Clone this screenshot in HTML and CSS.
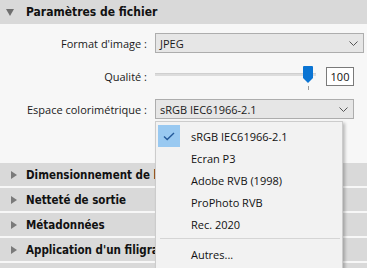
FILE: index.html
```html
<!DOCTYPE html>
<html>
<head>
    <title>Paramètres de fichier</title>
    <link rel="stylesheet" href="styles.css">
</head>
<body>
    <div class="panel">
        <div class="section-head open">
            <span class="tri-down"></span>
            <span class="section-title">Paramètres de fichier</span>
        </div>

        <div class="settings">
            <div class="row">
                <label class="label">Format d'image :</label>
                <div class="select wide">
                    <span>JPEG</span>
                    <svg class="chev" width="9" height="5" viewBox="0 0 9 5"><path d="M0.5 0.5 L4.5 4.5 L8.5 0.5" fill="none" stroke="#555" stroke-width="1"/></svg>
                </div>
            </div>

            <div class="row quality">
                <label class="label">Qualité :</label>
                <div class="slider">
                    <div class="track"></div>
                    <div class="thumb">
                        <svg width="10" height="17" viewBox="0 0 10 17"><path d="M1 0 H9 a1 1 0 0 1 1 1 V12 L5 17 L0 12 V1 a1 1 0 0 1 1 -1 Z" fill="#0a74d3"/></svg>
                    </div>
                    <div class="tick"></div>
                </div>
                <div class="num">100</div>
            </div>

            <div class="row">
                <label class="label">Espace colorimétrique :</label>
                <div class="select narrow">
                    <span>sRGB IEC61966-2.1</span>
                    <svg class="chev" width="9" height="5" viewBox="0 0 9 5"><path d="M0.5 0.5 L4.5 4.5 L8.5 0.5" fill="none" stroke="#555" stroke-width="1"/></svg>
                </div>
            </div>
        </div>

        <div class="section-head">
            <span class="tri-right"></span>
            <span class="section-title">Dimensionnement de l'image</span>
        </div>
        <div class="section-head">
            <span class="tri-right"></span>
            <span class="section-title">Netteté de sortie</span>
        </div>
        <div class="section-head">
            <span class="tri-right"></span>
            <span class="section-title">Métadonnées</span>
        </div>
        <div class="section-head">
            <span class="tri-right"></span>
            <span class="section-title">Application d'un filigrane</span>
        </div>
        <div class="section-head"></div>

        <div class="menu">
            <div class="item checked">
                <span class="check">
                    <svg width="12" height="9" viewBox="0 0 12 9"><path d="M1 4.5 L4.2 7.5 L11 1" fill="none" stroke="#24599a" stroke-width="1.4"/></svg>
                </span>
                <span>sRGB IEC61966-2.1</span>
            </div>
            <div class="item"><span class="check"></span><span>Ecran P3</span></div>
            <div class="item"><span class="check"></span><span>Adobe RVB (1998)</span></div>
            <div class="item"><span class="check"></span><span>ProPhoto RVB</span></div>
            <div class="item"><span class="check"></span><span>Rec. 2020</span></div>
            <div class="sep"></div>
            <div class="item"><span class="check"></span><span>Autres...</span></div>
        </div>
    </div>
</body>
</html>
```

FILE: styles.css
```css
body {
    margin: 0;
    background-color: #f7f7f7;
    font-family: "Open Sans", "Noto Sans", sans-serif;
    font-size: 11px;
    color: #1a1a1a;
}
.panel {
    position: relative;
    width: 367px;
    height: 268px;
    overflow: hidden;
}
.section-head {
    display: flex;
    align-items: center;
    height: 23px;
    margin-bottom: 2px;
    background-color: #d9d9d9;
    padding-left: 11px;
}
.section-head.open {
    height: 24px;
    margin-bottom: 0;
    padding-left: 6px;
}
.section-title {
    font-family: "DejaVu Sans Condensed", "DejaVu Sans", sans-serif;
    font-weight: bold;
    font-size: 11.5px;
    color: #111;
    white-space: nowrap;
}
.open .section-title {
    font-size: 12px;
}
.tri-down {
    width: 0;
    height: 0;
    border-left: 4px solid transparent;
    border-right: 4px solid transparent;
    border-top: 7px solid #6e6e6e;
    margin-right: 12px;
}
.tri-right {
    width: 0;
    height: 0;
    border-top: 4px solid transparent;
    border-bottom: 4px solid transparent;
    border-left: 6px solid #7a7a7a;
    margin-right: 9px;
}
.settings {
    display: flex;
    flex-direction: column;
    gap: 13px;
    box-sizing: border-box;
    height: 139px;
    padding-top: 9px;
}
.row {
    display: flex;
    align-items: center;
    height: 20px;
    flex-shrink: 0;
}
.label {
    width: 147px;
    text-align: right;
    margin-right: 8px;
    white-space: nowrap;
}
.select {
    display: flex;
    align-items: center;
    justify-content: space-between;
    box-sizing: border-box;
    height: 20px;
    padding: 0 5px 0 4px;
    background-color: #e6e6e6;
    border: 1px solid #adadad;
}
.select.wide {
    width: 209px;
}
.select.narrow {
    width: 199px;
}
.quality {
    height: 19px;
    margin-top: 1px;
}
.slider {
    position: relative;
    width: 161px;
    height: 19px;
    margin-right: 10px;
}
.track {
    position: absolute;
    left: 0;
    right: 0;
    top: 6px;
    height: 2px;
    background-color: #dcdcdc;
    border-top: 1px solid #cfcfcf;
}
.thumb {
    position: absolute;
    left: 148px;
    top: -1px;
}
.tick {
    position: absolute;
    left: 153px;
    top: 19px;
    width: 1px;
    height: 4px;
    background-color: #9a9a9a;
}
.num {
    box-sizing: border-box;
    width: 28px;
    height: 19px;
    line-height: 17px;
    text-align: center;
    background-color: #fff;
    border: 1px solid #7a7a7a;
    color: #111;
}
.menu {
    position: absolute;
    left: 155px;
    top: 121px;
    width: 188px;
    height: 160px;
    box-sizing: border-box;
    padding: 3px 2px;
    background-color: #f2f2f2;
    border: 1px solid #cccccc;
    box-shadow: 2px 2px 3px rgba(0, 0, 0, 0.25);
    font-size: 11px;
}
.item {
    display: flex;
    align-items: center;
    height: 22px;
    color: #111;
}
.check {
    display: flex;
    align-items: center;
    justify-content: center;
    width: 22px;
    height: 22px;
    margin-right: 11px;
}
.item.checked .check {
    background-color: #99c9f1;
}
.sep {
    height: 1px;
    margin: 3px 0 4px 2px;
    background-color: #d5d5d5;
}
```
